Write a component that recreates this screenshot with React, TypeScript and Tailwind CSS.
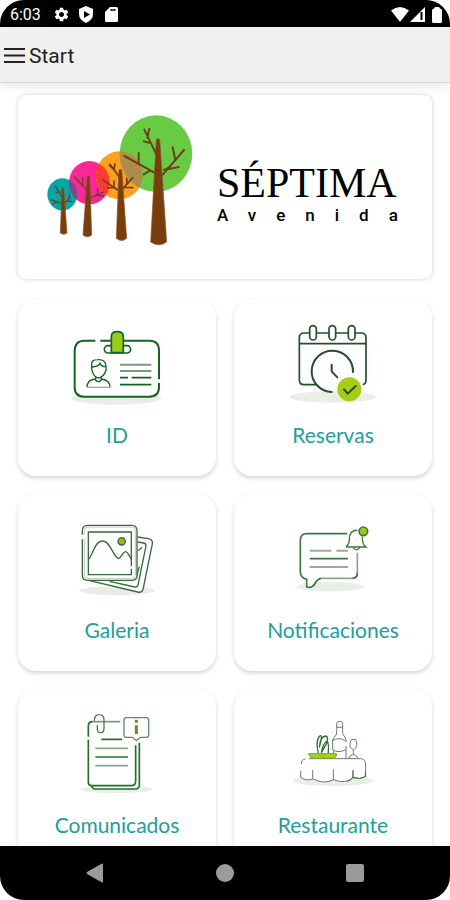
import React from "react";
import { MdSettings } from "react-icons/md";

type MenuItem = {
  label: string;
  icon: React.ReactNode;
};

const iconClass = "h-[100px] w-[120px]";

const IdIcon = () => (
  <svg viewBox="142 75 360 300" className={iconClass} fill="none" stroke="#176323" strokeWidth="5" aria-hidden="true">
    <ellipse cx="320" cy="325" rx="136" ry="19" fill="#e6eee6" stroke="none" />
    <path d="M448 279v12q0 29-29 29H223q-28 0-28-29V183q0-31 29-31h196q28 0 28 30v86" fill="#fff" stroke="none" />
    <path d="M257 152h-32q-30 0-30 31v108q0 29 28 29h196q29 0 29-29v-12M448 268v-86q0-30-28-30H272" strokeWidth="6" />
    <rect x="284" y="167" width="79" height="22" rx="11" fill="#fff" />
    <path d="M305 188v-48q0-15 18-15t18 15v48z" fill="#9acb1c" />
    <path d="M246 228q-3-19 17-19 25-2 26 20v11q-6 21-22 24-17-3-21-27zM247 231q20-1 24-11 5 10 16 10M258 262v9q8 8 17 0v-9M232 292q0-23 26-25M276 267q25 4 25 25" strokeWidth="4" />
    <path d="M232 292h69" stroke="#9ca79d" strokeWidth="4" />
    <path d="M331 224h94M331 243h94" stroke="#7f947f" strokeWidth="6" />
    <path d="M331 263h24M366 263h59M331 284h94" strokeWidth="5" />
  </svg>
);

const CalendarIcon = () => (
  <svg viewBox="146 75 360 300" className={iconClass} fill="none" stroke="#234f2a" strokeWidth="5" strokeLinecap="round" aria-hidden="true">
    <ellipse cx="324" cy="321" rx="130" ry="17" fill="#e8efe5" stroke="none" />
    <path d="M225 140h200v130q0 15-15 15H240q-15 0-15-15z" fill="#fff" stroke="none" />
    <path d="M275 284h-36q-14 0-14-14V143q0-14 14-14h17M277 129h35M335 129h35M393 129h18q14 0 14 14v126q0 12-8 14M225 161h200" />
    <rect x="256" y="107" width="20" height="43" rx="10" />
    <rect x="314" y="107" width="20" height="43" rx="10" />
    <rect x="372" y="107" width="20" height="43" rx="10" />
    <circle cx="324" cy="244" r="60" fill="#fff" stroke="none" />
    <path d="M386 246a62 62 0 1 0-64 60M322 224v20l17 18" strokeWidth="6" />
    <circle cx="375" cy="298" r="36" fill="#a4cc18" stroke="none" />
    <path d="M359 298l11 13 24-23" strokeWidth="6" />
  </svg>
);

const GalleryIcon = () => (
  <svg viewBox="142 60 360 300" className={iconClass} fill="none" stroke="#3a6a3d" strokeWidth="4" aria-hidden="true">
    <ellipse cx="322" cy="302" rx="114" ry="13" fill="#e7ece6" stroke="none" />
    <path d="M384 141l32 5q14 3 12 16l-27 132q-3 16-17 12L240 272" fill="#fff" />
    <path d="M384 156l18 3q8 2 7 9l-24 117q-2 8-10 6l-75-17M386 182l11-10M389 230l-8 28" />
    <path d="M218 148v108q0 15 15 15h134q15 0 15-15V122q0-16-16-16H234q-16 0-16 16v12" fill="#fff" />
    <path d="M224 147v108q0 11 11 11h131q11 0 11-11V123q0-12-12-12H235q-11 0-11 12v10" stroke="#9bb09b" strokeWidth="2" />
    <path d="M365 229V126H236v128h129v-18" />
    <path d="M237 207c13-13 18-54 42-54 23 0 29 43 47 53 10-2 13-22 22-21 9 1 10 15 17 21" />
    <circle cx="336" cy="154" r="11" fill="#8cbf0c" />
  </svg>
);

const NotificationIcon = () => (
  <svg viewBox="144 60 360 300" className={iconClass} fill="none" stroke="#3f7642" strokeWidth="4" aria-hidden="true">
    <ellipse cx="317" cy="290" rx="102" ry="14" fill="#e9efe8" stroke="none" />
    <path d="M245 131h122l31 57v62q0 15-15 15h-95q-10 3-19 17-8 13-23 10l-1-26q-19-5-19-20V151q0-20 19-20z" fill="#fff" stroke="none" />
    <path d="M367 131H245q-19 0-19 20v95q0 17 19 22v23q15 5 24-9 9-16 19-17" strokeWidth="5" />
    <path d="M397 188v62q0 15-15 15h-94" stroke="#8ca38d" strokeWidth="5" />
    <path d="M383 265q14-1 14-15" strokeWidth="5" />
    <path d="M254 182h65M334 182h35M254 231h115" stroke="#9bab9b" strokeWidth="6" />
    <path d="M254 206h115" strokeWidth="5" />
    <path d="M363 170q10-7 10-23 0-26 24-27M412 140q-1 22 11 31H363M385 173q10 13 19 0" fill="#fff" />
    <circle cx="415" cy="124" r="13" fill="#9acb19" strokeWidth="5" />
  </svg>
);

const NoticeIcon = () => (
  <svg viewBox="144 75 360 300" className={iconClass} fill="none" stroke="#20702a" strokeWidth="5" aria-hidden="true">
    <ellipse cx="323" cy="328" rx="108" ry="11" fill="#e8eee8" stroke="none" />
    <path d="M238 145l13-20h83l56 64v126q0 12-11 12H257l-19-21z" fill="#fff" stroke="none" />
    <path d="M380 196v107q0 14-13 14H249q-11 0-11-11V179M238 170v-32q0-13 13-13M243 315l12 12h123q13 0 13-12V188" />
    <path d="M251 125h83" stroke="#789379" />
    <path d="M256 122q1-19 15-18 14 0 14 17v24q0 14-11 13-10 0-9-13v-10" stroke="#4f7752" strokeWidth="4" />
    <path d="M277 178h62M259 231h98" />
    <path d="M259 205h98M259 257h98" stroke="#8ea38e" />
    <path d="M352 113h60q7 0 7 7v45q0 7-7 7h-18l-12 10-12-10h-18q-7 0-7-7v-45q0-7 7-7z" stroke="#668a66" strokeWidth="4" />
    <path d="M382 119v9M382 136v26" stroke="#659216" strokeWidth="9" />
  </svg>
);

const RestaurantIcon = () => (
  <svg viewBox="144 75 360 300" className={iconClass} fill="none" stroke="#6a7d6b" strokeWidth="3" aria-hidden="true">
    <ellipse cx="324" cy="302" rx="121" ry="16" fill="#e8eee8" stroke="none" />
    <path d="M238 237h168q16 0 16 19v34q-17 10-38 2-21 22-58 7-28 15-62-2-20 7-37-5l2-37q0-18 9-18z" fill="#fff" stroke="none" />
    <path d="M252 236h154q16 0 16 19v35q-17 10-38 2-21 22-58 7-28 15-62-2-20 7-37-5v-20M229 252q0-14 12-15M263 270v26M325 268v31M384 270v23" />
    <path d="M421 274v16q-16 10-37 3v-21M384 293q-8 9-18 11" stroke="#377442" />
    <path d="M335 148v-18q0-6 9-6t9 6v31l10 16v10M363 198v37M335 142h18M335 148v14l-12 17v31q19 10 39-1M323 182q18-12 39 0M326 211v12" />
    <path d="M379 178h13q10 24-7 31-17-6-6-31zM385 209v14q-12 3-14 13M385 223q12 3 14 13" />
    <path d="M280 219q-9-36 4-51 7-4 5 9l-6 26q2-33 19-35 10 1 2 24l-15 26q5-28 17-35 6 4 4 36" stroke="#346d35" strokeWidth="4" />
    <path d="M250 221h85q-1 15-13 14h-56q-10 0-16-14z" fill="#a5cf22" stroke="#75a82a" />
  </svg>
);

const TreesLogo = () => (
  <svg viewBox="105 60 450 420" className="h-[140px] w-[150px] shrink-0" aria-hidden="true">
    <defs>
      <clipPath id="teal-crown">
        <ellipse cx="157" cy="313" rx="45" ry="48" />
      </clipPath>
      <clipPath id="pink-crown">
        <ellipse cx="238" cy="278" rx="61" ry="65" />
      </clipPath>
      <clipPath id="orange-crown">
        <ellipse cx="328" cy="256" rx="70" ry="72" />
      </clipPath>
    </defs>
    <ellipse cx="157" cy="313" rx="45" ry="48" fill="#05a7a3" />
    <ellipse cx="238" cy="278" rx="61" ry="65" fill="#fb2798" />
    <ellipse cx="328" cy="256" rx="70" ry="72" fill="#ff9f20" />
    <ellipse cx="438" cy="191" rx="109" ry="115" fill="#69cb43" />
    {/* overlaps between neighbouring crowns */}
    <ellipse cx="238" cy="278" rx="61" ry="65" fill="#79498a" clipPath="url(#teal-crown)" />
    <ellipse cx="328" cy="256" rx="70" ry="72" fill="#fb3a31" clipPath="url(#pink-crown)" />
    <ellipse cx="438" cy="191" rx="109" ry="115" fill="#b18b4c" clipPath="url(#orange-crown)" />
    <g fill="none" stroke="#6b401b" strokeLinecap="round">
      <path d="M159 325l-23-36M147 308l-9-1M159 341l-37-12M140 335l-12 7M162 341l17-17M172 333l14 1M178 325l1-15" strokeWidth="4" />
      <path d="M234 304l-40-43M218 286v-23M238 325l43-19M256 316l25 2M263 311v-14" strokeWidth="4" />
      <path d="M330 264l-30-41M311 238l-13-12M312 239l3-17M328 303l-48-32M312 291v-18M312 292l-19 2M334 301l34-38M351 282l-1-17M344 292l24 1" strokeWidth="5" />
      <path d="M441 197l-38-78M412 143l6-27M418 158l-17-4M439 251l-96-53M386 221v-32M421 241l-20 12M453 260l69-80M496 210l-8-38M480 230l-14 9h-4M477 237l29-6" strokeWidth="6" />
    </g>
    <g fill="#783f0c" stroke="#8b4d26" strokeWidth="2">
      <path d="M156 295h5l10 134q-10 8-20 0z" />
      <path d="M232 258h7l6 177q-13 11-26 0z" />
      <path d="M327 239h8l15 206q-15 13-31 0z" />
      <path d="M439 149q5-5 10 0l21 307q-24 17-48 0z" />
    </g>
  </svg>
);

const MENU: MenuItem[] = [
  { label: "ID", icon: <IdIcon /> },
  { label: "Reservas", icon: <CalendarIcon /> },
  { label: "Galeria", icon: <GalleryIcon /> },
  { label: "Notificaciones", icon: <NotificationIcon /> },
  { label: "Comunicados", icon: <NoticeIcon /> },
  { label: "Restaurante", icon: <RestaurantIcon /> },
];

const StatusBar = () => (
  <div className="flex h-[27px] shrink-0 items-center bg-black pt-[2px] pr-2 pl-[10px] text-white">
    <span className="text-base leading-6">6:03</span>
    <MdSettings className="ml-3 size-[17px]" />
    <svg viewBox="0 0 14 17" className="ml-[9px] h-[17px] w-[14px]" aria-hidden="true">
      <path d="M7 0l7 3v5q0 6-7 9-7-3-7-9V3z" fill="#fff" />
      <path d="M5 5l6 3.500-6 3.500z" fill="#000" />
    </svg>
    <svg viewBox="0 0 13 15" className="ml-3 h-[15px] w-[13px]" aria-hidden="true">
      <path d="M5 0h6.500q1.500 0 1.500 1.500v12q0 1.500-1.500 1.500h-10Q0 15 0 13.500V5z" fill="#fff" />
      <path d="M5.500 3h5" stroke="#000" strokeWidth="2" strokeDasharray="1.300 .5" />
    </svg>
    <svg viewBox="0 0 18 15" className="ml-auto h-[15px] w-[18px]" aria-hidden="true">
      <path d="M0 3.500Q9-3.500 18 3.500L9 15z" fill="#fff" />
    </svg>
    <svg viewBox="0 0 15 15" className="ml-px h-[15px] w-[15px]" aria-hidden="true">
      <path d="M0 15L15 0v15z" fill="#fff" />
      <path d="M11.500 5v8" stroke="#000" strokeWidth="2" />
    </svg>
    <svg viewBox="0 0 10 16" className="ml-[7px] h-[16px] w-[10px]" aria-hidden="true">
      <path d="M3 0h4l1 1.500Q10 2 10 3.500v11q0 1.500-1.500 1.500h-7Q0 16 0 14.500v-11Q0 2 2 1.500z" fill="#fff" />
    </svg>
  </div>
);

const Header = () => (
  <header className="z-10 flex h-14 shrink-0 items-center gap-1 border-b border-[#d6d6d6] bg-[#f0f0f0] pt-[2px] pl-1 shadow-[0_4px_8px_rgba(0,0,0,0.08)]">
    <button type="button" aria-label="Menu" className="flex h-10 items-center">
      <svg viewBox="0 0 21 17" className="h-[17px] w-[21px]" stroke="#222" strokeWidth="2" aria-hidden="true">
        <path d="M0 2h21M0 8.500h21M0 15h21" />
      </svg>
    </button>
    <h1 className="text-[21px] leading-7 text-[#222]">Start</h1>
  </header>
);

const MenuCard = ({ label, icon }: MenuItem) => (
  <button
    type="button"
    className="flex flex-col items-center rounded-[18px] bg-white pt-4 pb-[27px] shadow-[0_2px_4px_rgba(0,0,0,0.18)]"
  >
    {icon}
    <span className="mt-[6px] font-['Lato',sans-serif] text-[21px] leading-7 text-[#20a099]">{label}</span>
  </button>
);

const NavBar = () => (
  <nav className="grid h-[54px] shrink-0 grid-cols-3 items-center justify-items-center bg-black px-[30px]">
    <button type="button" aria-label="Back">
      <svg viewBox="0 0 18 20" className="h-5 w-[18px]" fill="#9b9b9b" aria-hidden="true">
        <path d="M16 .5q1 0 1 1v17q0 1-1 1L1 11q-1-1 0-2z" />
      </svg>
    </button>
    <button type="button" aria-label="Home" className="size-[18px] rounded-full bg-[#9b9b9b]" />
    <button type="button" aria-label="Recent apps" className="size-[18px] rounded-xs bg-[#9b9b9b]" />
  </nav>
);

export default function App() {
  return (
    <div className="flex h-screen flex-col overflow-hidden rounded-[24px] bg-white font-['Roboto',sans-serif]">
      <StatusBar />
      <Header />
      <main className="min-h-0 flex-1 overflow-y-auto px-[18px] pt-3 pb-5 [scrollbar-width:none]">
        <section className="flex items-center rounded-lg bg-white pt-[15px] pb-[29px] pl-[27px] shadow-[0_0_4px_rgba(0,0,0,0.2)]">
          <TreesLogo />
          <div className="ml-[22px] pt-[30px] text-black">
            <p className="font-['Liberation_Serif',serif] text-[42px] leading-10">SÉPTIMA</p>
            <p className="text-[17px] leading-6 font-medium tracking-[20px]">Avenida</p>
          </div>
        </section>
        <div className="mt-5 grid grid-cols-2 gap-[18px]">
          {MENU.map((item) => (
            <MenuCard key={item.label} {...item} />
          ))}
        </div>
      </main>
      <NavBar />
    </div>
  );
}
